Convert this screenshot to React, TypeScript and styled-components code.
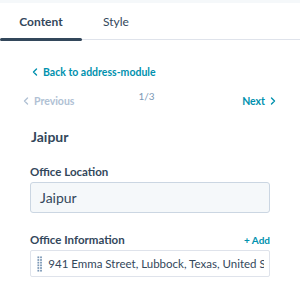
import React from "react";
import styled, { createGlobalStyle } from "styled-components";

const Global = createGlobalStyle`
  html, body { margin: 0; padding: 0; background: #ffffff; }
  body { font-family: "Lato", "Open Sans", sans-serif; color: #33475b; }
  * { box-sizing: border-box; }
`;

const Page = styled.div`
  width: 300px;
  height: 294px;
  background: #ffffff;
  display: flex;
  flex-direction: column;
  overflow: hidden;
`;

const TopStrip = styled.div`
  height: 3px;
  background: #f5f8fa;
`;

const Tabs = styled.div`
  display: flex;
  height: 37px;
  border-bottom: 1px solid #dfe3eb;
  position: relative;
`;

const Tab = styled.div<{ $active?: boolean; $w: number }>`
  width: ${(p) => p.$w}px;
  display: flex;
  align-items: center;
  justify-content: center;
  font-size: 12px;
  font-weight: ${(p) => (p.$active ? 700 : 400)};
  color: #33475b;
  padding-top: 1px;
  position: relative;
  &::after {
    content: "";
    display: ${(p) => (p.$active ? "block" : "none")};
    position: absolute;
    left: 0;
    right: 0;
    bottom: -2px;
    height: 3px;
    border-radius: 2px;
    background: #33475b;
  }
`;

const Body = styled.div`
  padding: 25px 30px 0 30px;
  display: flex;
  flex-direction: column;
`;

const BackLink = styled.div`
  display: flex;
  align-items: center;
  gap: 5px;
  padding-left: 2px;
  font-size: 10.5px;
  font-weight: 700;
  color: #0091ae;
  height: 14px;
`;

const Pager = styled.div`
  margin-top: 8px;
  margin-left: -7px;
  display: grid;
  grid-template-columns: 1fr auto 1fr;
  align-items: start;
  height: 20px;
`;

const PagerBtn = styled.div<{ $disabled?: boolean; $right?: boolean }>`
  display: flex;
  align-items: center;
  gap: 5px;
  justify-self: ${(p) => (p.$right ? "end" : "start")};
  font-size: 10.5px;
  font-weight: 700;
  color: ${(p) => (p.$disabled ? "#b0c1d4" : "#0091ae")};
  margin-top: 8px;
  margin-right: ${(p) => (p.$right ? "-6px" : "0")};
`;

const Count = styled.div`
  font-size: 10px;
  color: #7c98b6;
  margin-top: 3px;
`;

const Heading = styled.div`
  margin-top: 21px;
  font-size: 14px;
  font-weight: 700;
  color: #33475b;
  padding-left: 1px;
`;

const FieldHead = styled.div`
  display: flex;
  justify-content: space-between;
  align-items: baseline;
  margin-bottom: 4px;
`;

const Label = styled.div`
  font-size: 11.5px;
  font-weight: 700;
  color: #33475b;
`;

const AddLink = styled.div`
  font-size: 10px;
  font-weight: 700;
  color: #0091ae;
`;

const Field = styled.div<{ $top: number }>`
  margin-top: ${(p) => p.$top}px;
  display: flex;
  flex-direction: column;
`;

const Input = styled.div`
  height: 31px;
  background: #f5f8fa;
  border: 1px solid #cbd6e2;
  border-radius: 3px;
  display: flex;
  align-items: center;
  padding-left: 9px;
  font-size: 14px;
  color: #33475b;
`;

const ListItem = styled.div`
  height: 27px;
  background: #ffffff;
  border: 1px solid #dfe3eb;
  border-radius: 2px;
  display: flex;
  align-items: center;
  padding-left: 6px;
  padding-right: 5px;
  gap: 6px;
  overflow: hidden;
  white-space: nowrap;
`;

const ItemText = styled.span`
  font-size: 11.5px;
  color: #33475b;
  overflow: hidden;
`;

const Chevron = ({ dir, color }: { dir: "left" | "right"; color: string }) => (
  <svg width="6" height="8" viewBox="0 0 6 8">
    <path
      d={dir === "left" ? "M4.5 1 L1.5 4 L4.5 7" : "M1.5 1 L4.5 4 L1.5 7"}
      fill="none"
      stroke={color}
      strokeWidth="1.4"
      strokeLinecap="round"
      strokeLinejoin="round"
    />
  </svg>
);

const Grip = () => (
  <svg width="6" height="18" viewBox="0 0 6 18">
    {Array.from({ length: 6 }).map((_, r) =>
      [0, 1].map((c) => (
        <rect key={`${r}-${c}`} x={c * 3 + 0.5} y={r * 3 + 0.5} width="2" height="2" fill="#7c98b6" />
      ))
    )}
  </svg>
);

export default function App() {
  return (
    <>
      <Global />
      <Page>
        <TopStrip />
        <Tabs>
          <Tab $active $w={82}>Content</Tab>
          <Tab $w={68}>Style</Tab>
        </Tabs>
        <Body>
          <BackLink>
            <Chevron dir="left" color="#0091ae" />
            Back to address-module
          </BackLink>
          <Pager>
            <PagerBtn $disabled>
              <Chevron dir="left" color="#b0c1d4" />
              Previous
            </PagerBtn>
            <Count>1/3</Count>
            <PagerBtn $right>
              Next
              <Chevron dir="right" color="#0091ae" />
            </PagerBtn>
          </Pager>
          <Heading>Jaipur</Heading>
          <Field $top={20}>
            <FieldHead>
              <Label>Office Location</Label>
            </FieldHead>
            <Input>Jaipur</Input>
          </Field>
          <Field $top={20}>
            <FieldHead>
              <Label>Office Information</Label>
              <AddLink>+ Add</AddLink>
            </FieldHead>
            <ListItem>
              <Grip />
              <ItemText>941 Emma Street, Lubbock, Texas, United States</ItemText>
            </ListItem>
          </Field>
        </Body>
      </Page>
    </>
  );
}
